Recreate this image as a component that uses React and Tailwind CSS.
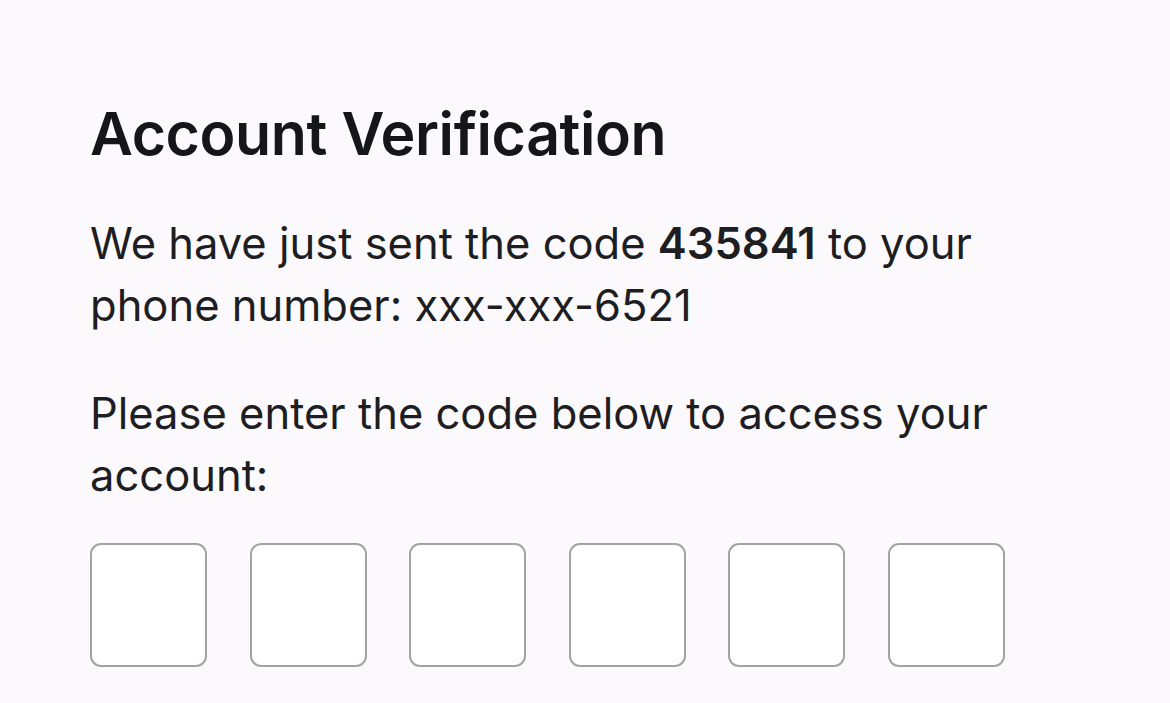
export default function App() {
  return (
    <div className="w-[1170px] h-[703px] overflow-hidden bg-[#fbf9fb] text-[#18181b]" style={{ fontFamily: "Inter, 'Noto Sans', sans-serif" }}>
      <div className="pl-[90px] pt-[102px]">
        <h1 className="text-[59px] leading-[64px] font-semibold text-[#15161a] tracking-[-0.4px]">Account Verification</h1>
        <p className="mt-[46px] text-[43.5px] leading-[62px] text-[#1d1d22] w-[1000px]">
          We have just sent the code <span className="font-semibold">435841</span> to your phone number: xxx-xxx-6521
        </p>
        <p className="mt-[46px] text-[43.5px] leading-[62px] text-[#1d1d22] w-[1000px]">
          Please enter the code below to access your account:
        </p>
        <div className="mt-[37px] flex gap-[42.6px]">
          {[0, 1, 2, 3, 4, 5].map((i) => (
            <div key={i} className="w-[117px] h-[124px] rounded-[11px] border-2 border-[#a3a3a6] bg-white" />
          ))}
        </div>
      </div>
    </div>
  );
}
